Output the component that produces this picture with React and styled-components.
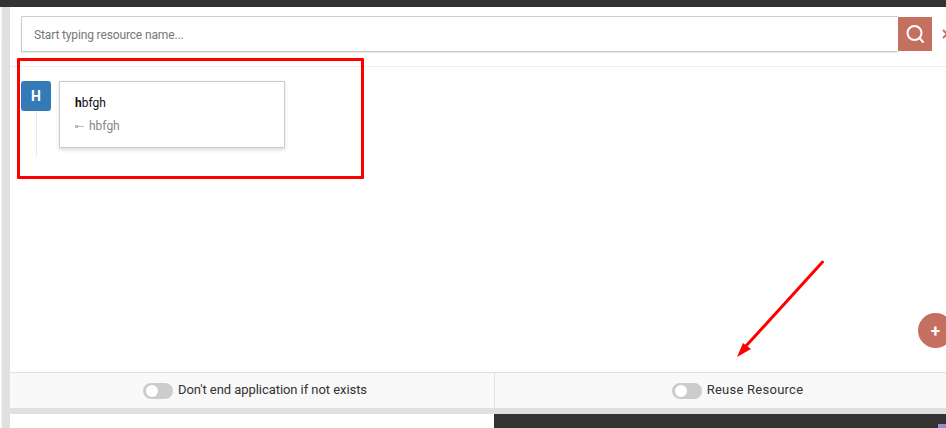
import React from "react";
import styled, { createGlobalStyle } from "styled-components";

const Global = createGlobalStyle`
  html, body { margin: 0; padding: 0; background: #fff; overflow: hidden; }
  body { font-family: Roboto, "Liberation Sans", sans-serif; }
`;

const Page = styled.div`
  position: relative;
  width: 946px;
  height: 428px;
  overflow: hidden;
  display: flex;
  flex-direction: column;
  background: #fff;
`;
const TopBar = styled.div`
  height: 7px;
  flex: none;
  background: #333;
`;
const Body = styled.div`
  flex: 1;
  display: flex;
  min-height: 0;
`;
const EdgeStrip = styled.div`
  width: 2px;
  flex: none;
  background: #fff;
  border-top: 30px solid #f8f8f8;
  box-shadow: inset -1px 0 0 #f1f1f1;
`;
const Rail = styled.div`
  width: 8px;
  flex: none;
  background: #e0e0e0;
`;
const Main = styled.div`
  flex: 1;
  min-width: 0;
  display: flex;
  flex-direction: column;
`;
const Panel = styled.div`
  height: 365px;
  flex: none;
  display: flex;
  flex-direction: column;
  background: #fff;
`;
const SearchArea = styled.div`
  height: 60px;
  flex: none;
  box-sizing: border-box;
  padding: 9px 0 0 11px;
  display: flex;
  align-items: flex-start;
  border-bottom: 1px solid #eee;
`;
const SearchBox = styled.div`
  width: 877px;
  height: 36px;
  flex: none;
  box-sizing: border-box;
  border: 1px solid #ccc;
  border-right: none;
  display: flex;
  align-items: center;
  padding: 1px 0 0 12px;
  font-size: 12px;
  letter-spacing: -0.14px;
  color: #777;
  box-shadow: 0 1px 1px rgba(0,0,0,.08);
`;
const SearchButton = styled.div`
  width: 34px;
  height: 34px;
  margin-top: 1px;
  flex: none;
  background: #c46f60;
  display: flex;
  align-items: center;
  justify-content: center;
`;
const CloseIcon = styled.svg`
  margin: 13px 0 0 10px;
  flex: none;
  width: 10px;
  height: 10px;
`;
const Results = styled.div`
  flex: 1;
  min-height: 0;
  padding: 14px 0 0 11px;
  display: flex;
  gap: 8px;
  align-items: flex-start;
`;
const Timeline = styled.div`
  width: 30px;
  flex: none;
  display: flex;
  flex-direction: column;
  align-items: center;
`;
const Tile = styled.div`
  width: 30px;
  height: 30px;
  border-radius: 3px;
  background: #337ab7;
  color: #fff;
  font-weight: 700;
  font-size: 14px;
  display: flex;
  align-items: center;
  justify-content: center;
`;
const TimelineLine = styled.div`
  width: 1px;
  height: 45px;
  background: #e8e8e8;
`;
const Card = styled.div`
  width: 226px;
  height: 67px;
  box-sizing: border-box;
  border: 1px solid #ccc;
  padding: 13px 15px 0;
  box-shadow: 0 2px 4px rgba(0,0,0,.14);
  background: #fff;
  font-size: 12px;
`;
const CardTitle = styled.div`
  color: #111;
  line-height: 16px;
  height: 16px;
  b { font-weight: 700; }
`;
const CardSub = styled.div`
  margin-top: 7px;
  color: #888;
  line-height: 16px;
  display: flex;
  align-items: center;
  gap: 5px;
`;
const Footer = styled.div`
  height: 36px;
  flex: none;
  display: flex;
  box-sizing: border-box;
  border-top: 1px solid #e0e0e0;
  background: #f9f9f9;
`;
const FooterCell = styled.div`
  flex: none;
  width: ${(p) => (p.$first ? "485px" : "485px")};
  display: flex;
  align-items: center;
  justify-content: center;
  gap: 5px;
  font-size: 13px;
  letter-spacing: ${(p) => (p.$first ? "-0.06px" : "0.25px")};
  color: #333;
  box-sizing: border-box;
  padding-left: ${(p) => (p.$first ? "6px" : "0")};
  border-right: ${(p) => (p.$first ? "1px solid #e0e0e0" : "none")};
`;
const FooterLabel = styled.span`
  margin-top: -2px;
`;
const Toggle = styled.span`
  width: 30px;
  height: 16px;
  border-radius: 8px;
  background: #ccc;
  position: relative;
  flex: none;
  &::before {
    content: "";
    position: absolute;
    left: 3px;
    top: 2px;
    width: 12px;
    height: 12px;
    border-radius: 50%;
    background: #fff;
  }
`;
const Separator = styled.div`
  height: 6px;
  flex: none;
  background: #e0e0e0;
`;
const Lower = styled.div`
  flex: 1;
  display: flex;
`;
const LowerLeft = styled.div`
  flex: 0 0 484px;
  background: #fff;
`;
const LowerRight = styled.div`
  flex: 1;
  background: #333;
  display: flex;
  justify-content: flex-end;
  align-items: flex-end;
`;
const PurpleChip = styled.div`
  width: 8px;
  height: 4px;
  background: #9b8cc9;
`;
const Fab = styled.div`
  position: absolute;
  left: 918px;
  top: 313px;
  width: 35px;
  height: 35px;
  border-radius: 50%;
  background: #c46f60;
  color: #fff;
  font-size: 17px;
  font-weight: 700;
  display: flex;
  align-items: center;
  justify-content: center;
`;
const Highlight = styled.div`
  position: absolute;
  left: 17px;
  top: 58px;
  width: 347px;
  height: 121px;
  box-sizing: border-box;
  border: 3px solid #f00;
  border-radius: 1px;
  pointer-events: none;
`;
const ArrowSvg = styled.svg`
  position: absolute;
  left: 730px;
  top: 255px;
  width: 100px;
  height: 110px;
  pointer-events: none;
`;

export default function App() {
  return (
    <Page>
      <Global />
      <TopBar />
      <Body>
        <EdgeStrip />
        <Rail />
        <Main>
          <Panel>
            <SearchArea>
              <SearchBox>Start typing resource name...</SearchBox>
              <SearchButton>
                <svg width="20" height="20" viewBox="0 0 20 20" fill="none" stroke="#fff" strokeWidth="2">
                  <circle cx="9.5" cy="9" r="7" />
                  <path d="M14.5 14 L18 18" strokeLinecap="round" />
                </svg>
              </SearchButton>
              <CloseIcon viewBox="0 0 10 10">
                <path d="M1 1 L9 9 M9 1 L1 9" stroke="#c46f60" strokeWidth="2" fill="none" />
              </CloseIcon>
            </SearchArea>
            <Results>
              <Timeline>
                <Tile>H</Tile>
                <TimelineLine />
              </Timeline>
              <Card>
                <CardTitle><b>h</b>bfgh</CardTitle>
                <CardSub>
                  <svg width="9" height="5" viewBox="0 0 9 5">
                    <rect x="0" y="1" width="3" height="3" fill="#bbb" />
                    <rect x="3" y="2" width="6" height="1" fill="#bbb" />
                  </svg>
                  hbfgh
                </CardSub>
              </Card>
            </Results>
          </Panel>
          <Footer>
            <FooterCell $first><Toggle /><FooterLabel>Don't end application if not exists</FooterLabel></FooterCell>
            <FooterCell><Toggle /><FooterLabel>Reuse Resource</FooterLabel></FooterCell>
          </Footer>
          <Separator />
          <Lower>
            <LowerLeft />
            <LowerRight><PurpleChip /></LowerRight>
          </Lower>
        </Main>
      </Body>
      <Fab>+</Fab>
      <Highlight />
      <ArrowSvg viewBox="0 0 100 110">
        <path d="M92.5 7 L16 91" stroke="#f00" strokeWidth="3" strokeLinecap="round" fill="none" />
        <path d="M7 102 L13 88 L21 94 Z" fill="#f00" />
      </ArrowSvg>
    </Page>
  );
}
